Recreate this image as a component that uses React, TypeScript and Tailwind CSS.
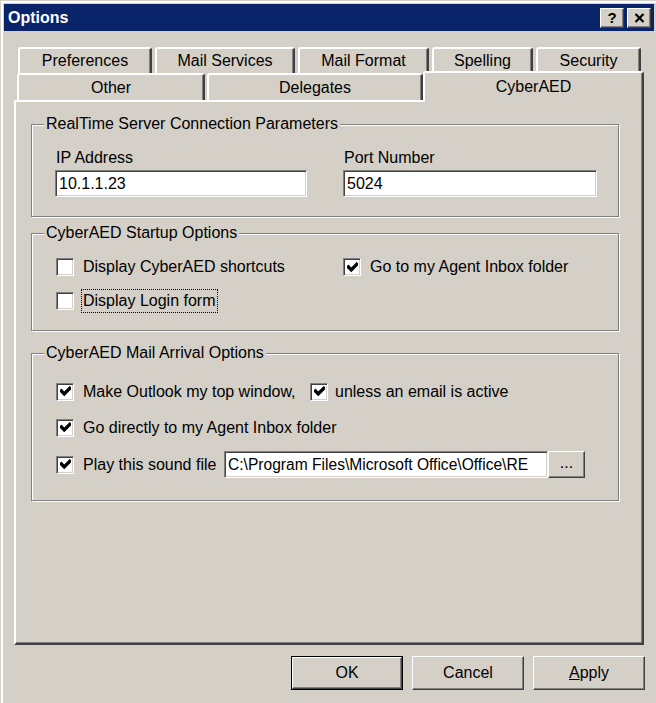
import React from "react";

const Check = ({ checked }: { checked?: boolean }) => (
  <span className="w-[18px] h-[18px] shrink-0 bg-white border border-t-[#808080] border-l-[#808080] border-b-white border-r-white shadow-[inset_1px_1px_0_#404040,inset_-1px_-1px_0_#d4d0c8] flex items-center justify-center">
    {checked && (
      <svg viewBox="0 0 7 7" className="w-[11px] h-[11px]">
        <polyline points="0.9,3.2 2.7,5 6.2,1.5" fill="none" stroke="black" strokeWidth="2.2" strokeLinecap="square" />
      </svg>
    )}
  </span>
);

const Field = ({ value, className = "" }: { value: string; className?: string }) => (
  <div
    className={`h-[27px] bg-white border border-t-[#808080] border-l-[#808080] border-b-white border-r-white shadow-[inset_1px_1px_0_#404040,inset_-1px_-1px_0_#d4d0c8] px-[3px] flex items-center overflow-hidden whitespace-nowrap ${className}`}
  >
    {value}
  </div>
);

const raised =
  "bg-[#d4d0c8] border border-t-white border-l-white border-r-[#404040] border-b-[#404040] shadow-[inset_-1px_-1px_0_#808080]";

const Tab = ({ label, w }: { label: string; w: string }) => (
  <div
    className={`${w} h-full flex items-center justify-center rounded-t-[3px] border-t-2 border-l-2 border-r-2 border-t-white border-l-white border-r-[#404040] shadow-[inset_-1px_0_0_#808080]`}
  >
    {label}
  </div>
);

const Group = ({ title, className, children }: { title: string; className: string; children: React.ReactNode }) => (
  <div className={`relative w-[588px] border border-[#808080] shadow-[1px_1px_0_#fff,inset_1px_1px_0_#fff] ${className}`}>
    <span className="absolute -top-[10px] left-[12px] px-[2px] bg-[#d4d0c8]">{title}</span>
    {children}
  </div>
);

const Item = ({ checked, label, focus, className = "" }: { checked?: boolean; label: string; focus?: boolean; className?: string }) => (
  <div className={`flex items-center ${className}`}>
    <Check checked={checked} />
    <span
      className={`ml-[7px] px-[1px] border ${focus ? "border-dotted border-black py-[2px]" : "border-transparent"}`}
    >
      {label}
    </span>
  </div>
);

export default function App() {
  return (
    <div className="w-[656px] h-[703px] overflow-hidden bg-[#d4d0c8] text-black text-[16px] leading-[18px] font-['Liberation_Sans',Arial,sans-serif] pt-[4px] pl-[4px] pr-[2px] shadow-[inset_1px_1px_0_#d4d0c8,inset_3px_3px_0_#fff]">
      {/* title bar */}
      <div className="h-[27px] bg-[#0a246a] flex items-center justify-between pl-[4px] pr-[3px]">
        <span className="text-white font-bold">Options</span>
        <div className="flex gap-[3px]">
          <div className={`w-[24px] h-[20px] ${raised} flex items-center justify-center font-bold text-[15px]`}>?</div>
          <div className={`w-[24px] h-[20px] ${raised} flex items-center justify-center`}>
            <svg viewBox="0 0 10 10" className="w-[11px] h-[10px]">
              <path d="M1 1L9 9M9 1L1 9" stroke="black" strokeWidth="2.2" />
            </svg>
          </div>
        </div>
      </div>

      <div className="ml-[10px] mt-[16px] w-[630px]">
        {/* tabs */}
        <div className="flex h-[26px] pl-[4px] gap-[3px]">
          <Tab label="Preferences" w="w-[134px]" />
          <Tab label="Mail Services" w="w-[140px]" />
          <Tab label="Mail Format" w="w-[131px]" />
          <Tab label="Spelling" w="w-[101px]" />
          <Tab label="Security" w="w-[105px]" />
        </div>
        <div className="flex items-end h-[27px] pl-[3px]">
          <Tab label="Other" w="w-[188px]" />
          <div className="w-[2px]" />
          <Tab label="Delegates" w="w-[216px]" />
          <div className="relative z-10 w-[221px] h-[31px] -mb-[2px] bg-[#d4d0c8] flex items-center justify-center pb-[2px] rounded-t-[3px] border-t-2 border-l-2 border-r-2 border-t-white border-l-white border-r-[#404040] shadow-[inset_-1px_0_0_#808080]">
            CyberAED
          </div>
        </div>

        {/* panel */}
        <div className="h-[545px] border-2 border-t-white border-l-white border-r-[#404040] border-b-[#404040] shadow-[inset_-1px_-1px_0_#808080] pt-[22px] pl-[15px]">
          <Group title="RealTime Server Connection Parameters" className="h-[93px]">
            <div className="flex pt-[24px] pl-[23px] gap-[36px]">
              <div className="w-[252px]">
                <div className="pl-[1px]">IP Address</div>
                <Field value="10.1.1.23" className="mt-[3px]" />
              </div>
              <div className="w-[254px]">
                <div className="pl-[1px]">Port Number</div>
                <Field value="5024" className="mt-[3px]" />
              </div>
            </div>
          </Group>

          <Group title="CyberAED Startup Options" className="h-[98px] mt-[16px]">
            <div className="grid grid-cols-[287px_1fr] gap-y-[16px] pt-[24px] pl-[24px]">
              <Item label="Display CyberAED shortcuts" className="h-[18px]" />
              <Item checked label="Go to my Agent Inbox folder" className="h-[18px]" />
              <Item label="Display Login form" focus className="h-[18px]" />
            </div>
          </Group>

          <Group title="CyberAED Mail Arrival Options" className="h-[148px] mt-[22px]">
            <div className="flex flex-col gap-[9px] pt-[24px] pl-[24px]">
              <div className="flex items-center h-[27px]">
                <Check checked />
                <span className="ml-[7px] px-[1px] border border-transparent w-[229px]">Make Outlook my top window,</span>
                <Check checked />
                <span className="ml-[5px] px-[1px] border border-transparent">unless an email is active</span>
              </div>
              <Item checked label="Go directly to my Agent Inbox folder" className="h-[27px]" />
              <div className="flex items-center h-[27px] mt-[1px]">
                <Check checked />
                <span className="ml-[7px] px-[1px] border border-transparent w-[143px]">Play this sound file</span>
                <Field value="C:\Program Files\Microsoft Office\Office\RE" className="w-[324px] text-[15.6px]" />
                <div className={`w-[37px] h-[27px] ${raised} flex items-center justify-center pb-[4px]`}>...</div>
              </div>
            </div>
          </Group>
        </div>

        {/* buttons */}
        <div className="flex justify-end gap-[9px] mt-[11px] -mr-[1px]">
          <div className="w-[112px] h-[34px] border border-black">
            <div className={`w-full h-full ${raised} flex items-center justify-center`}>OK</div>
          </div>
          <div className={`w-[112px] h-[34px] ${raised} flex items-center justify-center`}>Cancel</div>
          <div className={`w-[112px] h-[34px] ${raised} flex items-center justify-center`}>
            <span><span className="underline">A</span>pply</span>
          </div>
        </div>
      </div>
    </div>
  );
}
